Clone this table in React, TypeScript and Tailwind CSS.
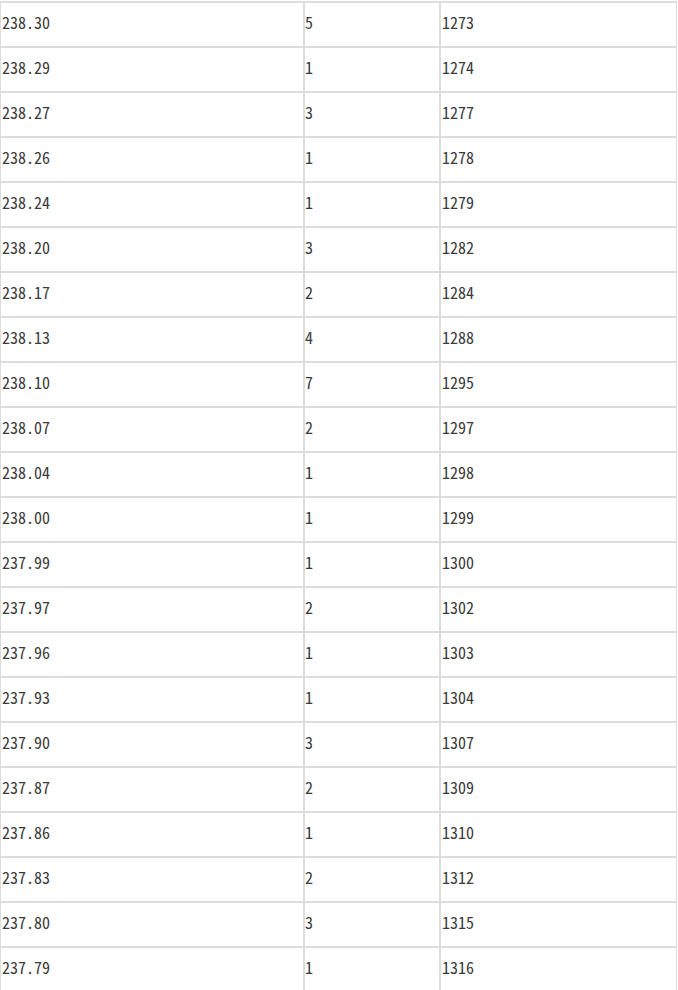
import React from "react";

const rows: [string, string, string][] = [
  ["238.30", "5", "1273"],
  ["238.29", "1", "1274"],
  ["238.27", "3", "1277"],
  ["238.26", "1", "1278"],
  ["238.24", "1", "1279"],
  ["238.20", "3", "1282"],
  ["238.17", "2", "1284"],
  ["238.13", "4", "1288"],
  ["238.10", "7", "1295"],
  ["238.07", "2", "1297"],
  ["238.04", "1", "1298"],
  ["238.00", "1", "1299"],
  ["237.99", "1", "1300"],
  ["237.97", "2", "1302"],
  ["237.96", "1", "1303"],
  ["237.93", "1", "1304"],
  ["237.90", "3", "1307"],
  ["237.87", "2", "1309"],
  ["237.86", "1", "1310"],
  ["237.83", "2", "1312"],
  ["237.80", "3", "1315"],
  ["237.79", "1", "1316"],
];

export default function App() {
  return (
    <div
      className="w-[678px] h-[990px] overflow-hidden bg-white text-[16px] text-[#3a3a3a]"
      style={{ fontFamily: '"Noto Sans Mono CJK SC", "Liberation Mono", monospace' }}
    >
      <div className="mt-[1px] border-t border-[#dcdcdc] w-[677px]">
        {rows.map((r, i) => (
          <div key={i} className="flex h-[45px]">
            <div className="w-[304px] h-[45px] border border-[#dcdcdc] flex items-center pl-[1px] pb-[5px]">{r[0]}</div>
            <div className="w-[136px] h-[45px] border border-[#dcdcdc] flex items-center pb-[5px]">{r[1]}</div>
            <div className="w-[237px] h-[45px] border border-[#dcdcdc] flex items-center pl-[1px] pb-[5px]">{r[2]}</div>
          </div>
        ))}
      </div>
    </div>
  );
}
